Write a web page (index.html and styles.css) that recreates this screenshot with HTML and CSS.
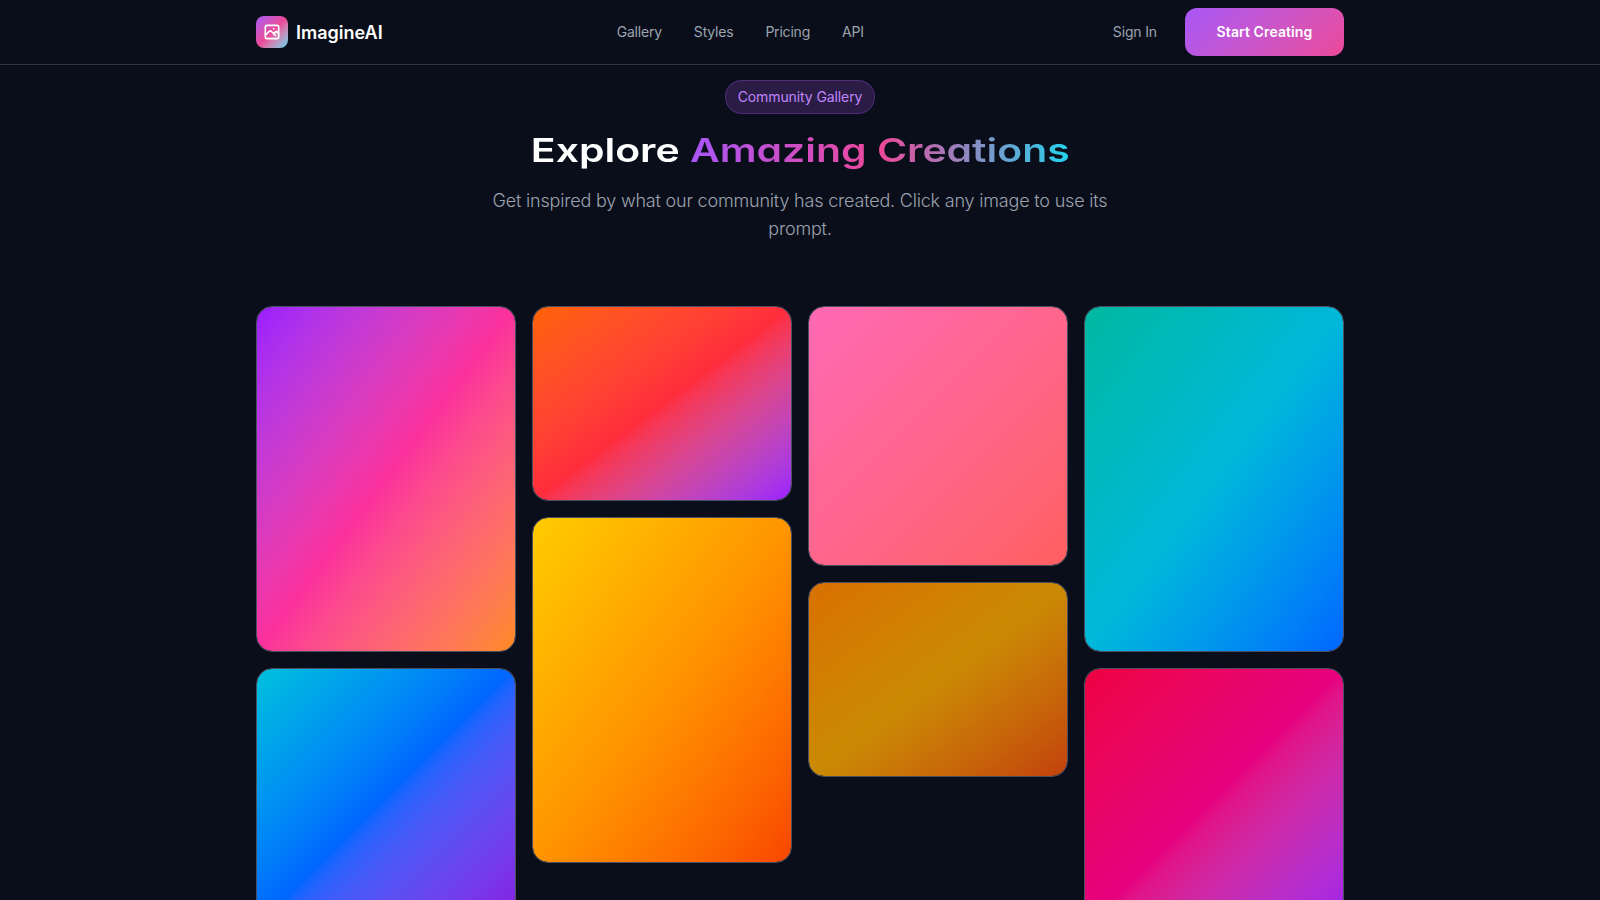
FILE: index.html
```html
<!DOCTYPE html>
<html lang="en">
<head>
    <meta charset="UTF-8">
    <meta name="viewport" content="width=device-width, initial-scale=1.0">
    <title>ImagineAI - Community Gallery</title>
    <link rel="stylesheet" href="styles.css">
</head>
<body>
    <nav class="navbar">
        <div class="nav-inner">
            <a href="#" class="logo">
                <span class="logo-icon">
                    <svg width="20" height="20" viewBox="0 0 24 24" fill="none" stroke="white" stroke-width="2" stroke-linecap="round" stroke-linejoin="round">
                        <path d="M4 16l4.586-4.586a2 2 0 012.828 0L16 16m-2-2l1.586-1.586a2 2 0 012.828 0L20 14m-6-6h.01M6 20h12a2 2 0 002-2V6a2 2 0 00-2-2H6a2 2 0 00-2 2v12a2 2 0 002 2z"></path>
                    </svg>
                </span>
                <span class="logo-text">ImagineAI</span>
            </a>
            <div class="nav-links">
                <a href="#">Gallery</a>
                <a href="#">Styles</a>
                <a href="#">Pricing</a>
                <a href="#">API</a>
            </div>
            <div class="nav-actions">
                <a href="#" class="sign-in">Sign In</a>
                <a href="#" class="btn-start">Start Creating</a>
            </div>
        </div>
    </nav>

    <main class="gallery-section">
        <header class="section-head">
            <span class="badge">Community Gallery</span>
            <h1><span class="title-inner">Explore <span class="grad-text">Amazing Creations</span></span></h1>
            <p>Get inspired by what our community has created. Click any image to use its prompt.</p>
        </header>

        <div class="gallery">
            <div class="gallery-col">
                <div class="card tall g-purple"></div>
                <div class="card square g-blue"></div>
            </div>
            <div class="gallery-col">
                <div class="card wide g-orange"></div>
                <div class="card tall g-yellow"></div>
            </div>
            <div class="gallery-col">
                <div class="card square g-pink"></div>
                <div class="card wide g-amber"></div>
            </div>
            <div class="gallery-col">
                <div class="card tall g-teal"></div>
                <div class="card square g-red"></div>
            </div>
        </div>
    </main>
</body>
</html>
```

FILE: styles.css
```css
* {
    box-sizing: border-box;
}
body {
    margin: 0;
    background: #0a0e1a;
    color: white;
    font-family: "Inter", sans-serif;
}
a {
    text-decoration: none;
    color: inherit;
}
.navbar {
    height: 65px;
    border-bottom: 1px solid #2f3542;
}
.nav-inner {
    max-width: 1152px;
    height: 64px;
    margin: 0 auto;
    padding: 0 32px;
    display: flex;
    align-items: center;
    justify-content: space-between;
}
.logo {
    display: flex;
    align-items: center;
    gap: 8px;
}
.logo-icon {
    width: 32px;
    height: 32px;
    border-radius: 8px;
    display: flex;
    align-items: center;
    justify-content: center;
    background: linear-gradient(135deg in oklab, #a855f7, #ec4899 50%, #22d3ee);
}
.logo-text {
    font-size: 18px;
    font-weight: 600;
}
.nav-links {
    display: flex;
    gap: 32px;
    margin: 0 15px 2px 0;
    font-size: 14px;
    letter-spacing: -0.2px;
    color: #9ca3af;
}
.nav-actions {
    display: flex;
    align-items: center;
    gap: 28px;
}
.sign-in {
    margin-bottom: 2px;
    font-size: 14px;
    letter-spacing: -0.15px;
    color: #9ca3af;
}
.btn-start {
    width: 159px;
    height: 48px;
    padding-bottom: 2px;
    border-radius: 12px;
    display: flex;
    align-items: center;
    justify-content: center;
    font-size: 14px;
    font-weight: 600;
    letter-spacing: 0.1px;
    background: linear-gradient(135deg in oklab, #a855f7, #ec4899);
}
.gallery-section {
    max-width: 1152px;
    margin: 0 auto;
    padding: 15px 32px 64px;
}
.section-head {
    text-align: center;
    margin-bottom: 63px;
}
.badge {
    display: inline-block;
    padding: 7px 12px;
    border-radius: 999px;
    font-size: 14px;
    line-height: 18px;
    letter-spacing: -0.1px;
    color: #c084fc;
    background: rgba(168, 85, 247, 0.2);
    border: 1px solid rgba(168, 85, 247, 0.3);
}
.section-head h1 {
    margin: 16px 0 17px;
    font-size: 33px;
    line-height: 40px;
    font-weight: 600;
    white-space: nowrap;
}
/* no wide display font installed, so stretch Inter to the title width */
.title-inner {
    display: inline-block;
    transform: scaleX(1.24);
    font-feature-settings: "cv11";
}
.grad-text {
    background: linear-gradient(90deg, #a855f7, #ec4899 50%, #22d3ee);
    -webkit-background-clip: text;
    background-clip: text;
    color: transparent;
}
.section-head p {
    max-width: 672px;
    margin: 0 auto;
    font-size: 18px;
    line-height: 28px;
    font-weight: 300;
    letter-spacing: -0.19px;
    color: #9ca3af;
}
.gallery {
    display: flex;
    gap: 16px;
    align-items: flex-start;
}
.gallery-col {
    flex: 1;
    display: flex;
    flex-direction: column;
    gap: 16px;
}
.card {
    border-radius: 16px;
    border: 1px solid #4a5060;
    background-clip: padding-box;
}
.tall {
    aspect-ratio: 260 / 346;
}
.wide {
    aspect-ratio: 4 / 3;
}
.square {
    aspect-ratio: 1;
}
.g-purple {
    background-image: linear-gradient(to bottom right in oklab, #9b1bff, #fb309c 50%, #ff8a1a);
}
.g-blue {
    background-image: linear-gradient(to bottom right in oklab, #00c0dc, #0066ff 50%, #8a10e0);
}
.g-orange {
    background-image: linear-gradient(to bottom right in oklab, #ff6200, #ff2d3c 50%, #9b1bff);
}
.g-yellow {
    background-image: linear-gradient(to bottom right in oklab, #ffcc00, #ff9500 50%, #f84500);
}
.g-pink {
    background-image: linear-gradient(to bottom right in oklab, #ff69b4, #ff6060);
}
.g-amber {
    background-image: linear-gradient(to bottom right in oklab, #d97000, #ca8a04 50%, #c2410c);
}
.g-teal {
    background-image: linear-gradient(to bottom right in oklab, #00b8a0, #00b8d9 50%, #0066ff);
}
.g-red {
    background-image: linear-gradient(to bottom right in oklab, #ee0040, #e6007e 50%, #a020f0);
}
```
